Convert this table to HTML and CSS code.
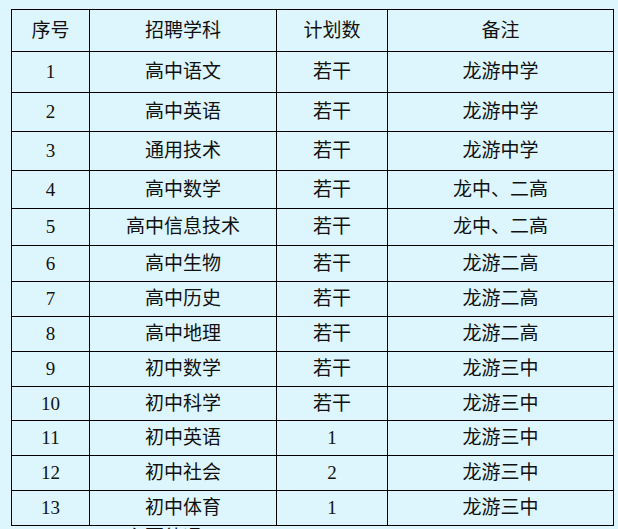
FILE: index.html
```html
<!DOCTYPE html>
<html lang="zh-CN">
<head>
<meta charset="utf-8">
<link rel="stylesheet" href="styles.css">
</head>
<body>
<table class="grid">
  <colgroup>
    <col class="c1"><col class="c2"><col class="c3"><col class="c4">
  </colgroup>
  <tr class="r42"><td>序号</td><td>招聘学科</td><td>计划数</td><td>备注</td></tr>
  <tr class="r41"><td>1</td><td>高中语文</td><td>若干</td><td>龙游中学</td></tr>
  <tr class="r39"><td>2</td><td>高中英语</td><td>若干</td><td>龙游中学</td></tr>
  <tr class="r39"><td>3</td><td>通用技术</td><td>若干</td><td>龙游中学</td></tr>
  <tr class="r38"><td>4</td><td>高中数学</td><td>若干</td><td>龙中、二高</td></tr>
  <tr class="r37"><td>5</td><td>高中信息技术</td><td>若干</td><td>龙中、二高</td></tr>
  <tr class="r36"><td>6</td><td>高中生物</td><td>若干</td><td>龙游二高</td></tr>
  <tr class="r35"><td>7</td><td>高中历史</td><td>若干</td><td>龙游二高</td></tr>
  <tr class="r35"><td>8</td><td>高中地理</td><td>若干</td><td>龙游二高</td></tr>
  <tr class="r35"><td>9</td><td>初中数学</td><td>若干</td><td>龙游三中</td></tr>
  <tr class="r34"><td>10</td><td>初中科学</td><td>若干</td><td>龙游三中</td></tr>
  <tr class="r35"><td>11</td><td>初中英语</td><td>1</td><td>龙游三中</td></tr>
  <tr class="r35"><td>12</td><td>初中社会</td><td>2</td><td>龙游三中</td></tr>
  <tr class="r35"><td>13</td><td>初中体育</td><td>1</td><td>龙游三中</td></tr>
</table>
<p class="after">三、主要待遇</p>
</body>
</html>
```
FILE: styles.css
```css
html, body {
  margin: 0;
  padding: 0;
  background: #ddf5fc;
}
body {
  padding: 9px 0 0 11px;
  font-family: "Liberation Serif", "Noto Sans CJK SC", serif;
  font-size: 19px;
  color: #111;
  overflow: hidden;
  height: 529px;
  box-sizing: border-box;
}
.grid {
  border-collapse: collapse;
  table-layout: fixed;
  width: 603px;
}
.grid td {
  border: 1px solid #000;
  padding: 0;
  text-align: center;
  vertical-align: middle;
  line-height: 20px;
}
.c1 { width: 78px; }
.c2 { width: 187px; }
.c3 { width: 111px; }
.c4 { width: 226px; }
.r42 { height: 42px; }
.r41 { height: 41px; }
.r39 { height: 39px; }
.r38 { height: 38px; }
.r37 { height: 37px; }
.r36 { height: 36px; }
.r35 { height: 35px; }
.r34 { height: 34px; }
.after {
  margin: 0;
  padding-left: 77px;
  padding-top: 2px;
  font-size: 19px;
  line-height: 20px;
}
```
